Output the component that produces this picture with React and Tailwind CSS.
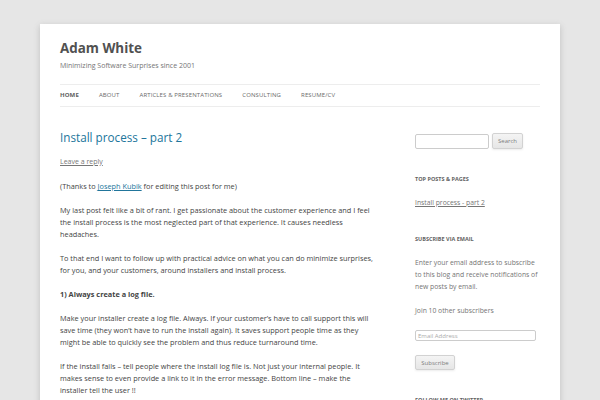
import React from "react";

const navItems = ["About", "Articles & Presentations", "Consulting", "Resume/CV"];

// each paragraph is kept as its printed lines so the wrap matches the page
const Lines = ({ lines }) =>
  lines.map((line, i) => (
    <React.Fragment key={i}>
      {line}
      {i < lines.length - 1 && <br />}
    </React.Fragment>
  ));

const App = () => {
  return (
    <div className="min-h-[400px] bg-[#e6e6e6] pt-[24px] font-['Open_Sans',sans-serif] text-[#444]">
      <div className="mx-[40px] bg-white px-[20px] pb-[30px] shadow-[0_2px_6px_rgba(100,100,100,0.3)]">
        {/* Header */}
        <header className="pt-[15px]">
          <h1 className="text-[13.4px] font-bold leading-[18px] text-[#515151]">Adam White</h1>
          <p className="mt-[3px] text-[7px] leading-[12px] text-[#757575]">
            Minimizing Software Surprises since 2001
          </p>
          <nav className="mt-[12px] flex h-[23px] items-center gap-[20px] border-y border-[#ededed] text-[6px] uppercase tracking-[0.02em] text-[#6a6a6a]">
            <span className="font-bold text-[#5e5e5e]">Home</span>
            {navItems.map((item) => (
              <span key={item}>{item}</span>
            ))}
          </nav>
        </header>

        <div className="flex justify-between">
          {/* Main post */}
          <main className="mt-[22px] w-[316px]">
            <h2 className="text-[11.7px] leading-[16px] text-[#21759b]">Install process – part 2</h2>
            <p className="mt-[11px] text-[7px] leading-[12px] text-[#777] underline">Leave a reply</p>
            <div className="mt-[12px] space-y-[12px] whitespace-nowrap text-[7.35px] leading-[12px]">
              <p>
                (Thanks to <span className="text-[#21759b] underline">Joseph Kubik</span> for editing this post for me)
              </p>
              <p>
                <Lines
                  lines={[
                    "My last post felt like a bit of rant. I get passionate about the customer experience and I feel",
                    "the install process is the most neglected part of that experience. It causes needless",
                    "headaches.",
                  ]}
                />
              </p>
              <p>
                <Lines
                  lines={[
                    "To that end I want to follow up with practical advice on what you can do minimize surprises,",
                    "for you, and your customers, around installers and install process.",
                  ]}
                />
              </p>
              <p className="font-bold">1) Always create a log file.</p>
              <p>
                <Lines
                  lines={[
                    "Make your installer create a log file. Always. If your customer’s have to call support this will",
                    "save time (they won’t have to run the install again). It saves support people time as they",
                    "might be able to quickly see the problem and thus reduce turnaround time.",
                  ]}
                />
              </p>
              <p>
                <Lines
                  lines={[
                    "If the install fails – tell people where the install log file is. Not just your internal people. It",
                    "makes sense to even provide a link to it in the error message. Bottom line – make the",
                    "installer tell the user !!",
                  ]}
                />
              </p>
            </div>
          </main>

          {/* Sidebar */}
          <aside className="mt-[26px] w-[125px] text-[6.8px] leading-[12px] text-[#757575]">
            <div className="flex items-center gap-[3px]">
              <div className="h-[15px] w-[74px] rounded-[2px] border border-[#ccc] bg-white" />
              <div className="flex h-[16px] w-[31px] items-center justify-center rounded-[2px] border border-[#d2d2d2] bg-gradient-to-b from-[#f4f4f4] to-[#e6e6e6] text-[6px] text-[#7c7c7c] shadow-[0_1px_2px_rgba(64,64,64,0.1)]">
                Search
              </div>
            </div>

            <h3 className="mt-[24px] text-[5.5px] font-bold uppercase leading-[12px] text-[#636363]">Top Posts &amp; Pages</h3>
            <p className="mt-[12px] underline">Install process - part 2</p>

            <h3 className="mt-[24px] text-[5.5px] font-bold uppercase leading-[12px] text-[#636363]">Subscribe via Email</h3>
            <p className="mt-[12px] whitespace-nowrap">
              <Lines
                lines={[
                  "Enter your email address to subscribe",
                  "to this blog and receive notifications of",
                  "new posts by email.",
                ]}
              />
            </p>
            <p className="mt-[12px]">Join 10 other subscribers</p>
            <div className="mt-[13px] flex h-[11px] w-[121px] items-center rounded-[2px] border border-[#ccc] px-[2px] text-[6px] text-[#aaa]">
              Email Address
            </div>
            <div className="mt-[14px] flex h-[15px] w-[40px] items-center justify-center rounded-[2px] border border-[#d2d2d2] bg-gradient-to-b from-[#f4f4f4] to-[#e6e6e6] text-[6px] text-[#7c7c7c] shadow-[0_1px_2px_rgba(64,64,64,0.1)]">
              Subscribe
            </div>

            <h3 className="mt-[24px] text-[5.5px] font-bold uppercase leading-[12px] text-[#636363]">Follow me on Twitter</h3>
          </aside>
        </div>
      </div>
    </div>
  );
};

export default App;
